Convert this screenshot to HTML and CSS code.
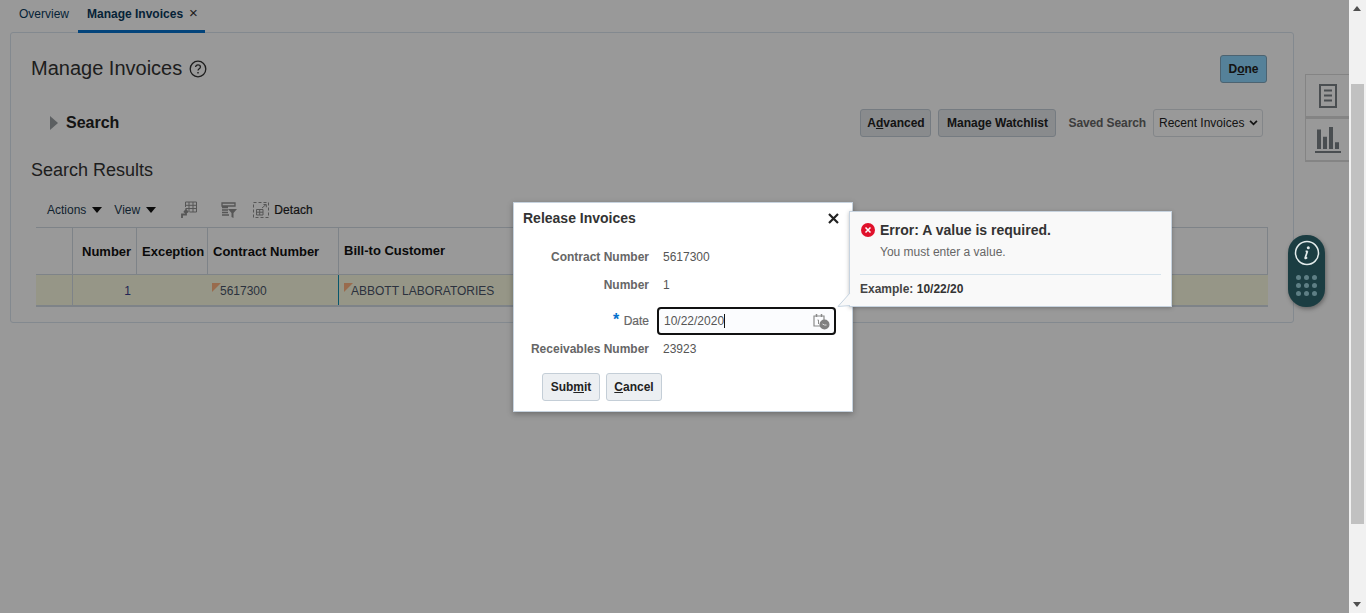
FILE: index.html
```html
<!doctype html>
<html lang="en">
 <head>
  <meta charset="UTF-8">
  <title>Manage Invoices</title>
  <meta name="viewport" content="width=device-width, initial-scale=1.0">
  <link rel="stylesheet" href="styles.css">
 </head>
 <body>
  <div class="page">
   <nav class="tabs">
    <a class="tab">Overview</a>
    <a class="tab tab-active">Manage Invoices<span class="tab-close">&times;</span></a>
   </nav>

   <section class="panel">
    <header class="panel-head">
     <h1>Manage Invoices</h1>
     <svg class="help" viewBox="0 0 18 18" width="18" height="18"><circle cx="9" cy="9" r="7.8" fill="none" stroke="#333" stroke-width="1.3"/><path d="M6.6 7.1c0-1.5 1.1-2.3 2.4-2.3s2.4.8 2.4 2.1c0 1.9-2.4 1.9-2.4 3.7" fill="none" stroke="#333" stroke-width="1.3"/><rect x="8.3" y="12" width="1.4" height="1.5" fill="#333"/></svg>
     <button class="btn btn-done">D<u>o</u>ne</button>
    </header>

    <div class="search-bar">
     <span class="disclose"></span>
     <h2>Search</h2>
     <div class="search-tools">
      <button class="btn btn-adv">A<u>d</u>vanced</button>
      <button class="btn btn-watch">Manage Watchlist</button>
      <span class="saved-label">Saved Search</span>
      <div class="select">Recent Invoices
       <svg viewBox="0 0 10 7" width="9" height="6"><path d="M1 1l4 4 4-4" fill="none" stroke="#222" stroke-width="2"/></svg>
      </div>
     </div>
    </div>

    <h3>Search Results</h3>

    <div class="toolbar">
     <span class="menu">Actions <i class="caret"></i></span>
     <span class="menu">View <i class="caret"></i></span>
     <svg class="tool-freeze" viewBox="0 0 16 18" width="16" height="18"><path d="M4.5 1h11v10h-7M4.5 1v5M4.5 4.300h11M4.500 7.500h11M8 1v10M12 1v10" fill="none" stroke="#8f8f8f" stroke-width="1"/><path d="M1 17v-3.500h4V10M3 11.500l2-2.500 2 2.500" fill="none" stroke="#8f8f8f" stroke-width="1.800"/></svg>
     <svg class="tool-filter" viewBox="0 0 17 17" width="17" height="17"><path d="M1 1h13v3H1zM1 5.500h6M1 8h6M1 10.500h6M1 13h7" fill="none" stroke="#8f8f8f" stroke-width="1.300"/><path d="M7 7h9l-3.500 4v5l-2-1v-4z" fill="#8f8f8f"/></svg>
     <svg class="tool-detach" viewBox="0 0 16 16" width="16" height="16"><rect x=".5" y=".5" width="15" height="15" fill="none" stroke="#8f8f8f" stroke-dasharray="3 2"/><path d="M3.500 7.500h6.500v5.500H3.500zM3.500 10.200h6.500M6.700 7.500v5.500" fill="none" stroke="#8f8f8f"/><path d="M9 6l4-3.500M10.500 2.500h2.800v2.800" fill="none" stroke="#8f8f8f"/></svg>
     <span class="detach">Detach</span>
    </div>

    <div class="table">
     <div class="table-row table-head">
      <div class="cell c-pick"></div>
      <div class="cell c-num">Number</div>
      <div class="cell c-exc">Exception</div>
      <div class="cell c-con">Contract Number</div>
      <div class="cell c-bill">Bill-to Customer</div>
     </div>
     <div class="table-row table-body">
      <div class="cell c-pick"></div>
      <div class="cell c-num">1</div>
      <div class="cell c-exc"></div>
      <div class="cell c-con flagged">5617300</div>
      <div class="cell c-bill flagged">ABBOTT LABORATORIES</div>
     </div>
    </div>
   </section>

   <div class="side-tabs">
    <div class="side-tab">
     <svg viewBox="0 0 18 24" width="18" height="24"><rect x="1" y="1" width="16" height="22" fill="none" stroke="#7c8288" stroke-width="2"/><path d="M5 6.500h8M5 11.500h8M5 16.500h8" stroke="#7c8288" stroke-width="2"/></svg>
    </div>
    <div class="side-tab">
     <svg viewBox="0 0 26 26" width="26" height="26"><path d="M2 2.600h4V22H2zM8 9.700h4V22H8zM14 0h4v22h-4zM20 15.300h4V22h-4z" fill="#7c8288"/><rect y="24" width="26" height="2" fill="#7c8288"/></svg>
    </div>
   </div>

   <div class="overlay"></div>

   <div class="info-pill">
    <svg viewBox="0 0 26 26" width="26" height="26"><circle cx="13" cy="13" r="11.500" fill="none" stroke="#e4ecec" stroke-width="1.500"/><circle cx="14.300" cy="7.800" r="1.500" fill="#e4ecec"/><path d="M13.500 11l-2.300 6.800c-.2.800.5 1 1.900-.4M11.600 11.300h2" fill="none" stroke="#e4ecec" stroke-width="1.700"/></svg>
    <div class="pill-dots"><i></i><i></i><i></i><i></i><i></i><i></i><i></i><i></i><i></i></div>
   </div>

   <div class="dialog">
    <div class="dialog-head">
     <span>Release Invoices</span>
     <svg viewBox="0 0 11 11" width="11" height="11"><path d="M1 1l9 9M10 1l-9 9" stroke="#222" stroke-width="2.200"/></svg>
    </div>
    <div class="form">
     <div class="form-row"><label>Contract Number</label><span>5617300</span></div>
     <div class="form-row"><label>Number</label><span>1</span></div>
     <div class="form-row form-date">
      <label><em>*</em> Date</label>
      <div class="date-input">
       <span class="date-text">10/22/2020</span>
       <svg viewBox="0 0 17 17" width="17" height="17"><path d="M1 3h10v10H1z" fill="none" stroke="#8a8a8a" stroke-width="1.200"/><path d="M3.500 1v3M8.500 1v3" stroke="#8a8a8a" stroke-width="1.500"/><path d="M4.500 7h1v4" fill="none" stroke="#8a8a8a"/><circle cx="11.500" cy="11.500" r="5" fill="#808080"/><path d="M9.500 11l2 1h2" fill="none" stroke="#ddd"/></svg>
      </div>
     </div>
     <div class="form-row"><label>Receivables Number</label><span>23923</span></div>
    </div>
    <div class="dialog-actions">
     <button class="btn btn-light btn-submit">Sub<u>m</u>it</button>
     <button class="btn btn-light btn-cancel"><u>C</u>ancel</button>
    </div>
   </div>

   <div class="note">
    <svg class="note-tail" viewBox="0 0 14 14" width="14" height="14"><path d="M13 0v13H0z" fill="#f9f9f9"/><path d="M13 0L1 13.500l12-1" fill="none" stroke="#c5d3e0"/></svg>
    <div class="note-title">
     <svg viewBox="0 0 14 14" width="14" height="14"><circle cx="7" cy="7" r="7" fill="#e0112b"/><path d="M4.500 4.500l5 5M9.500 4.500l-5 5" stroke="#fff" stroke-width="1.500"/></svg>
     <span>Error: A value is required.</span>
    </div>
    <p>You must enter a value.</p>
    <div class="note-foot">Example: <b>10/22/20</b></div>
   </div>
  </div>

  <div class="scrollbar">
   <span class="arrow-up"></span>
   <div class="thumb"></div>
   <span class="arrow-down"></span>
  </div>
 </body>
</html>
```

FILE: styles.css
```css
html, body {
  margin: 0;
  padding: 0;
  height: 613px;
  overflow: hidden;
}

body {
  display: flex;
  background: #f1f1f1;
  font-family: "Liberation Sans", Arial, sans-serif;
  font-size: 12px;
  color: #333;
}

.page {
  position: relative;
  width: 1349px;
  height: 613px;
  background: #fff;
  flex: none;
}

/* dim layer of the modal, everything under it goes grey */
.overlay {
  position: absolute;
  top: 0;
  left: 0;
  right: 0;
  bottom: 0;
  background: rgba(0, 0, 0, 0.4);
  z-index: 5;
}

.tabs {
  display: flex;
  height: 32px;
  padding-left: 10px;
  box-sizing: border-box;
}

.tab {
  padding: 7px 9px 0;
  color: #0a3a5c;
  line-height: 14px;
  white-space: nowrap;
}

.tab-active {
  width: 127px;
  box-sizing: border-box;
  border-bottom: 3px solid #0572ce;
  font-weight: bold;
  height: 33px;
  position: relative;
  z-index: 1;
}

.tab-close {
  font-weight: normal;
  font-size: 15px;
  line-height: 10px;
  margin-left: 6px;
  color: #333;
}

.panel {
  width: 1284px;
  height: 291px;
  margin-left: 10px;
  box-sizing: border-box;
  border: 1px solid #dbe4ee;
  border-radius: 3px;
  padding: 22px 26px 0 20px;
}

.panel-head {
  display: flex;
  align-items: center;
  height: 28px;
}

h1 {
  margin: 0;
  padding-bottom: 2px;
  font-size: 20px;
  font-weight: normal;
}

.help {
  margin-left: 7px;
}

.btn {
  font-family: inherit;
  font-size: 12px;
  font-weight: bold;
  height: 28px;
  padding: 0;
  color: #222;
  background: #e4e8ec;
  border: 1px solid #c4ced7;
  border-radius: 3px;
}

.btn-done {
  margin-left: auto;
  width: 47px;
  background: #8ed8ff;
  border-color: #7fa6bd;
}

.btn-adv { width: 71px; }
.btn-watch { width: 118px; }
.btn-submit { width: 58px; }
.btn-cancel { width: 56px; }

.search-bar {
  display: flex;
  align-items: center;
  height: 28px;
  margin-top: 26px;
  padding-left: 19px;
}

.disclose {
  width: 0;
  height: 0;
  border-left: 8px solid #9a9ea2;
  border-top: 7px solid transparent;
  border-bottom: 7px solid transparent;
}

h2 {
  margin: 0 0 0 8px;
  font-size: 16px;
  color: #222;
}

.search-tools {
  display: flex;
  align-items: center;
  margin-left: auto;
  margin-right: 4px;
}

.search-tools .btn + .btn {
  margin-left: 7px;
}

.saved-label {
  margin-left: 12px;
  font-weight: bold;
  color: #666;
  letter-spacing: -.1px;
}

.select {
  display: flex;
  align-items: center;
  justify-content: space-between;
  width: 110px;
  height: 28px;
  margin-left: 7px;
  box-sizing: border-box;
  padding: 0 4px 0 5px;
  border: 1px solid #dbe0e5;
  border-radius: 3px;
  color: #222;
}

h3 {
  margin: 23px 0 0;
  font-size: 18px;
  line-height: 21px;
  font-weight: normal;
}

.toolbar {
  display: flex;
  align-items: center;
  height: 20px;
  margin-top: 19px;
  padding-left: 16px;
}

.menu {
  display: flex;
  align-items: center;
  margin-right: 12px;
  color: #1c3a50;
}

.caret {
  width: 0;
  height: 0;
  margin-left: 6px;
  border-top: 6px solid #111;
  border-left: 5px solid transparent;
  border-right: 5px solid transparent;
}

.tool-freeze { margin-left: 13px; }
.tool-filter { margin-left: 24px; }
.tool-detach { margin-left: 15px; }

.detach {
  margin-left: 5px;
  color: #222;
  letter-spacing: .1px;
  -webkit-text-stroke: .2px #222;
}

.table {
  width: 1232px;
  margin: 7px 0 0 5px;
}

.table-row {
  display: flex;
}

.table-head {
  height: 48px;
  border-top: 1px solid #d3dbe3;
  border-right: 1px solid #d3dbe3;
  box-sizing: border-box;
  font-size: 13px;
  font-weight: bold;
  color: #111;
}

.table-head .cell {
  border-right: 1px solid #d3dbe3;
  border-bottom: 1px solid #d3dbe3;
  padding-left: 5px;
  white-space: nowrap;
}

.table-head .c-num {
  padding-left: 9px;
}

.table-head .c-bill {
  flex: 1;
  border-right: none;
  padding-bottom: 2px;
}

.table-body {
  height: 32px;
  background: #fbfbe2;
  border-bottom: 2px solid #d3dbe3;
  box-sizing: border-box;
  color: #4a5468;
}

.cell {
  display: flex;
  align-items: center;
  box-sizing: border-box;
}

.table-body .cell {
  padding-top: 1px;
}

.c-pick { width: 37px; }
.c-num { width: 64px; }
.c-exc { width: 71px; }
.c-con { width: 131px; }
.c-bill { flex: 1; }

.table-body .c-pick { border-right: 1px solid #d3dbe3; }
.table-body .c-num { justify-content: flex-end; padding-right: 6px; color: #3a3f8c; }
.table-body .c-con { border-right: 1px solid #0d8fb5; padding-left: 5px; }
.table-body .c-bill { padding-left: 6px; }

.flagged {
  position: relative;
}

/* little orange corner on edited cells */
.flagged::before {
  content: "";
  position: absolute;
  top: 8px;
  margin-left: -1px;
  border-top: 9px solid #ffb380;
  border-right: 9px solid transparent;
}

.table-body .c-con.flagged { padding-left: 12px; }
.table-body .c-bill.flagged { padding-left: 12px; }
.table-body .c-con.flagged::before { left: 5px; }
.table-body .c-bill.flagged::before { left: 6px; }

.side-tabs {
  position: absolute;
  top: 74px;
  left: 1305px;
  width: 44px;
}

.side-tab {
  display: flex;
  align-items: center;
  justify-content: center;
  height: 44px;
  box-sizing: border-box;
  border: 1px solid #dcdcdc;
  border-right: none;
  border-bottom: 2px solid #dcdcdc;
}

.info-pill {
  position: absolute;
  top: 235px;
  left: 1288px;
  width: 37px;
  height: 72px;
  box-sizing: border-box;
  padding-top: 5px;
  display: flex;
  flex-direction: column;
  align-items: center;
  background: #1b3d42;
  border-radius: 18px;
  box-shadow: 1px 2px 4px rgba(0, 0, 0, .35);
  z-index: 6;
}

.pill-dots {
  display: grid;
  grid-template-columns: repeat(3, 5px);
  gap: 3px;
  margin-top: 9px;
}

.pill-dots i {
  width: 5px;
  height: 5px;
  border-radius: 50%;
  background: #5e7f85;
}

.dialog {
  position: absolute;
  top: 202px;
  left: 513px;
  width: 340px;
  height: 210px;
  box-sizing: border-box;
  background: #fff;
  border: 1px solid #c7d3df;
  box-shadow: 0 2px 6px rgba(0, 0, 0, .3);
  z-index: 6;
  padding: 0 16px 0 9px;
}

.dialog-head {
  display: flex;
  align-items: center;
  justify-content: space-between;
  height: 30px;
  font-size: 14px;
  font-weight: bold;
  color: #333;
}

.dialog-head svg {
  margin-right: -3px;
}

.form {
  margin-top: 10px;
}

.form-row {
  display: flex;
  align-items: center;
  height: 28px;
  color: #555;
}

.form-row label {
  width: 126px;
  text-align: right;
  font-weight: bold;
  color: #666;
  margin-right: 14px;
  flex: none;
}

.form-date {
  margin: 8px 0 0;
}

.form-date label {
  margin-right: 8px;
  font-weight: normal;
  -webkit-text-stroke: .2px #666;
}

.form-date em {
  color: #0572ce;
  font-style: normal;
  font-weight: bold;
  font-size: 16px;
  line-height: 10px;
  margin-right: 1px;
  -webkit-text-stroke: 0;
}

.date-input {
  display: flex;
  align-items: center;
  justify-content: space-between;
  width: 179px;
  height: 28px;
  box-sizing: border-box;
  border: 2px solid #111;
  border-radius: 4px;
  padding: 0 4px 0 5px;
  background: #fbfcfe;
}

.date-text {
  border-right: 1px solid #111;
  line-height: 14px;
}

.dialog-actions {
  display: flex;
  gap: 6px;
  margin-top: 10px;
  padding-left: 19px;
}

.btn-light {
  background: #eceff2;
}

.note {
  position: absolute;
  top: 211px;
  left: 849px;
  width: 323px;
  height: 96px;
  box-sizing: border-box;
  background: #f9f9f9;
  border: 1px solid #c7d3df;
  box-shadow: 0 1px 4px rgba(0, 0, 0, .25);
  padding: 10px 10px 0;
  z-index: 7;
}

.note-tail {
  position: absolute;
  left: -13px;
  bottom: -1px;
}

.note-title {
  display: flex;
  align-items: center;
  gap: 5px;
  padding-left: 1px;
  font-size: 14px;
  font-weight: bold;
  color: #333;
}

.note p {
  margin: 7px 0 0 20px;
  color: #666;
  line-height: 14px;
}

.note-foot {
  margin-top: 15px;
  padding-top: 7px;
  border-top: 1px solid #d6e3ec;
  font-weight: bold;
  color: #444;
  line-height: 14px;
}

.note-foot b {
  color: #333;
}

.scrollbar {
  position: relative;
  flex: 1;
  height: 613px;
}

.arrow-up {
  position: absolute;
  top: 6px;
  left: 4px;
  border-bottom: 5px solid #505050;
  border-left: 4px solid transparent;
  border-right: 4px solid transparent;
}

.arrow-down {
  position: absolute;
  bottom: 6px;
  left: 4px;
  border-top: 5px solid #505050;
  border-left: 4px solid transparent;
  border-right: 4px solid transparent;
}

.thumb {
  position: absolute;
  top: 84px;
  left: 2px;
  width: 13px;
  height: 440px;
  background: #c1c1c1;
}
```
